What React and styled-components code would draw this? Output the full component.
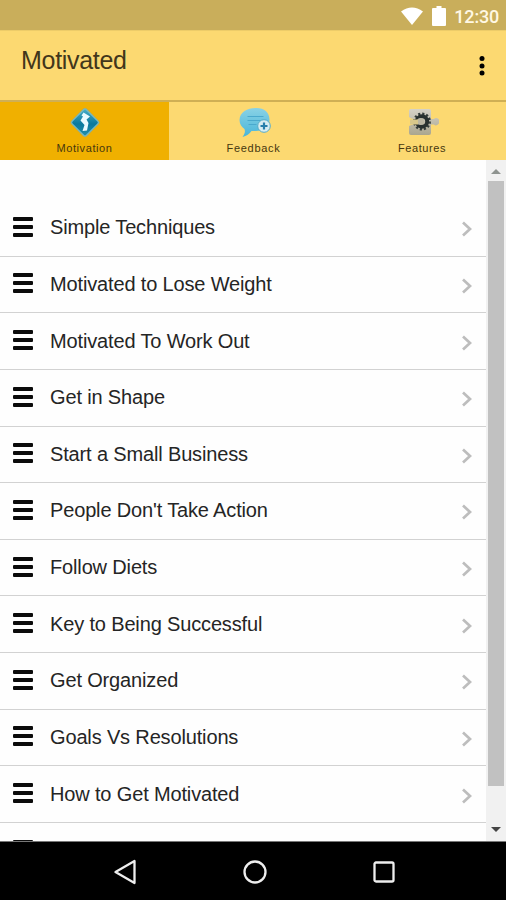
import styled, { createGlobalStyle } from "styled-components";

const GlobalStyle = createGlobalStyle`
  * {
    box-sizing: border-box;
  }
  body {
    margin: 0;
    font-family: "Liberation Sans", Arial, sans-serif;
  }
  svg {
    display: block;
    flex-shrink: 0;
  }
`;

const Screen = styled.div`
  width: 506px;
  height: 900px;
  display: flex;
  flex-direction: column;
  overflow: hidden;
  background-color: #fefefe;
`;

const StatusBar = styled.div`
  height: 30px;
  flex-shrink: 0;
  display: flex;
  justify-content: flex-end;
  align-items: center;
  gap: 8px;
  padding: 2px 7px 0 0;
  background-color: #c9ae5b;
`;

const Clock = styled.span`
  font-family: Roboto, sans-serif;
  font-size: 18px;
  font-weight: 500;
  line-height: 28px;
  letter-spacing: -0.2px;
  color: #fff8e4;
  padding-top: 2px;
`;

const HeaderBar = styled.header`
  height: 72px;
  flex-shrink: 0;
  display: flex;
  justify-content: space-between;
  padding: 0 20px 0 21px;
  background-color: #fcd971;
  border-top: 1px solid #edcc69;
  border-bottom: 2px solid #cfaf54;
`;

const Title = styled.h1`
  margin: 0;
  padding-top: 14px;
  font-size: 25px;
  font-weight: 400;
  line-height: 30px;
  letter-spacing: -0.3px;
  color: #42361b;
`;

const MenuButton = styled.div`
  padding-top: 24px;
`;

const Tabs = styled.nav`
  height: 58px;
  flex-shrink: 0;
  display: grid;
  grid-template-columns: 169px 169px 168px;
`;

const Tab = styled.div`
  display: flex;
  flex-direction: column;
  align-items: center;
  padding-top: 4px;
  background-color: ${({ $active }) => ($active ? "#f0b000" : "#fcd971")};
`;

const TabLabel = styled.span`
  font-size: 11px;
  line-height: 12px;
  letter-spacing: ${({ $spacing }) => $spacing}px;
  color: #46370f;
  margin-top: 3px;
`;

const Content = styled.main`
  height: 681px;
  flex-shrink: 0;
  display: flex;
`;

const List = styled.ul`
  list-style: none;
  margin: 0;
  padding: 40px 0 0;
  flex: 1;
  overflow: hidden;
`;

const Row = styled.li`
  height: 56.63px;
  display: flex;
  align-items: center;
  padding: 0 13px;
  border-bottom: 1px solid #d2d2d2;

  & svg {
    margin-top: 3px;
  }
`;

const Bars = styled.div`
  width: 20px;
  height: 20px;
  display: flex;
  flex-direction: column;
  justify-content: space-between;
  margin-bottom: 2px;
`;

const Bar = styled.div`
  height: 4px;
  border-radius: 1px;
  background-color: #0b0b0b;
`;

const Label = styled.span`
  flex: 1;
  margin: 0 0 1px 17px;
  font-size: 20px;
  line-height: 24px;
  letter-spacing: -0.15px;
  color: #252525;
`;

const Scrollbar = styled.div`
  width: 20px;
  display: flex;
  flex-direction: column;
  align-items: center;
  background-color: #f1f1f1;
`;

const ScrollArrow = styled.div`
  height: ${({ $height }) => $height}px;
  display: flex;
  align-items: center;
`;

const Thumb = styled.div`
  width: 16px;
  height: 605px;
  background-color: #c1c1c1;
`;

const Track = styled.div`
  flex: 1;
`;

const NavBar = styled.footer`
  flex: 1;
  display: flex;
  align-items: center;
  justify-content: space-between;
  padding: 1px 110px 0 113px;
  background-color: #000;
  border-top: 1px solid #777;
`;

const topics = [
  "Simple Techniques",
  "Motivated to Lose Weight",
  "Motivated To Work Out",
  "Get in Shape",
  "Start a Small Business",
  "People Don't Take Action",
  "Follow Diets",
  "Key to Being Successful",
  "Get Organized",
  "Goals Vs Resolutions",
  "How to Get Motivated",
  "",
];

const WifiIcon = () => (
  <svg width="24" height="20" viewBox="0 0 24 20">
    <path d="M1 5.5Q12-2.5 23 5.5L12 19Z" fill="#fff" />
  </svg>
);

const BatteryIcon = () => (
  <svg width="14" height="20" viewBox="0 0 14 20">
    <path d="M4.5 0h5v2H13q1 0 1 1v16q0 1-1 1H1q-1 0-1-1V3q0-1 1-1h3.5z" fill="#fff" />
  </svg>
);

const MotivationIcon = () => (
  <svg width="34" height="33" viewBox="0 0 34 33">
    <defs>
      <linearGradient id="sign" x1="0" y1="0" x2="1" y2="1">
        <stop offset="0" stopColor="#4ab0ca" />
        <stop offset="0.55" stopColor="#0b799e" />
        <stop offset="1" stopColor="#258fa9" />
      </linearGradient>
    </defs>
    <rect x="6" y="5.5" width="22" height="22" rx="3" transform="rotate(45 17 16.5)" fill="#a2aa78" />
    <rect x="7" y="6.5" width="20" height="20" rx="2" transform="rotate(45 17 16.5)" fill="url(#sign)" stroke="#79bdc5" />
    <path d="M15.500 6.500L22 10.500L18.500 13.500L20.500 17L19 24.500L14.500 25L16.500 19L12.500 14.500L15 10.500L13.500 9.500Z" fill="#eafaff" />
  </svg>
);

const FeedbackIcon = () => (
  <svg width="34" height="33" viewBox="0 0 34 33">
    <defs>
      <linearGradient id="bubble" x1="0" y1="0" x2="0" y2="1">
        <stop offset="0" stopColor="#8ad2e5" />
        <stop offset="1" stopColor="#48b5d9" />
      </linearGradient>
    </defs>
    <g transform="translate(1.5 0)">
      <path d="M17 2C25 1.500 31 6 31 13.500C31 21 25 25 17 25L13 25C11 28 8 30 4 31C6 28 7 26 6 23C3 21 1 18 1 14C1 6 9 2 17 2Z" fill="url(#bubble)" />
      <path d="M9 10.500H25M9 14.500H22M10 18.500H18" stroke="#4aa9cd" strokeWidth="1.200" />
      <circle cx="25.500" cy="20" r="6.300" fill="#d7edf1" stroke="#55abc8" />
      <path d="M25.500 16.500V23.500M22 20H29" stroke="#287faa" strokeWidth="2.200" />
    </g>
  </svg>
);

const FeaturesIcon = () => (
  <svg width="34" height="33" viewBox="0 0 34 33">
    <defs>
      <linearGradient id="puzzle" x1="0" y1="0" x2="0" y2="1">
        <stop offset="0" stopColor="#d5d2c7" />
        <stop offset="1" stopColor="#aaa68f" />
      </linearGradient>
    </defs>
    <path d="M4 4.500Q4 3 5.500 3H24Q26 3 26 5V13H29Q31 11 34 13.500V17.500Q31 21 29 18.500H26V27Q26 29 24 29H6Q4 29 4 27V20Q6 19 9 18V13Q6 13 4 11Z" fill="url(#puzzle)" />
    <circle cx="17" cy="15.500" r="7.700" fill="none" stroke="#343d3b" strokeWidth="2.600" strokeDasharray="2.100 1.930" />
    <circle cx="17" cy="15.500" r="5.200" fill="none" stroke="#28312f" strokeWidth="4" />
    <circle cx="15.500" cy="15.500" r="3.600" fill="#bab6a2" />
    <path d="M5 13.500H13V18.500H5Z" fill="#d8c88b" />
  </svg>
);

const Chevron = () => (
  <svg width="12" height="18" viewBox="0 0 12 18">
    <path d="M2 2.500L9 9L2 15.500" fill="none" stroke="#bdbdbd" strokeWidth="2.700" />
  </svg>
);

const Header = () => (
  <HeaderBar>
    <Title>Motivated</Title>
    <MenuButton>
      <svg width="8" height="22" viewBox="0 0 8 22">
        <circle cx="4" cy="3.500" r="2.500" />
        <circle cx="4" cy="11" r="2.500" />
        <circle cx="4" cy="18" r="2.500" />
      </svg>
    </MenuButton>
  </HeaderBar>
);

export default function App() {
  return (
    <Screen>
      <GlobalStyle />
      <StatusBar>
        <WifiIcon />
        <BatteryIcon />
        <Clock>12:30</Clock>
      </StatusBar>
      <Header />
      <Tabs>
        <Tab $active>
          <MotivationIcon />
          <TabLabel $spacing={0.6}>Motivation</TabLabel>
        </Tab>
        <Tab>
          <FeedbackIcon />
          <TabLabel $spacing={0.7}>Feedback</TabLabel>
        </Tab>
        <Tab>
          <FeaturesIcon />
          <TabLabel $spacing={0.6}>Features</TabLabel>
        </Tab>
      </Tabs>
      <Content>
        <List>
          {topics.map((topic, i) => (
            <Row key={i}>
              <Bars>
                <Bar />
                <Bar />
                <Bar />
              </Bars>
              <Label>{topic}</Label>
              <Chevron />
            </Row>
          ))}
        </List>
        <Scrollbar>
          <ScrollArrow $height={21}>
            <svg width="10" height="6" viewBox="0 0 10 6">
              <path d="M0 6L5 1L10 6Z" fill="#8f9490" />
            </svg>
          </ScrollArrow>
          <Thumb />
          <Track />
          <ScrollArrow $height={22}>
            <svg width="10" height="6" viewBox="0 0 10 6">
              <path d="M0 0H10L5 5Z" fill="#454545" />
            </svg>
          </ScrollArrow>
        </Scrollbar>
      </Content>
      <NavBar>
        <svg width="24" height="28" viewBox="0 0 24 28">
          <path d="M2.500 14L21.500 3V25Z" fill="none" stroke="#eee" strokeWidth="2.300" strokeLinejoin="round" />
        </svg>
        <svg width="26" height="26" viewBox="0 0 26 26">
          <circle cx="13" cy="13" r="10.500" fill="none" stroke="#eee" strokeWidth="2.300" />
        </svg>
        <svg width="24" height="24" viewBox="0 0 24 24">
          <rect x="2.500" y="2.500" width="19" height="19" rx="1.500" fill="none" stroke="#eee" strokeWidth="2.300" />
        </svg>
      </NavBar>
    </Screen>
  );
}
